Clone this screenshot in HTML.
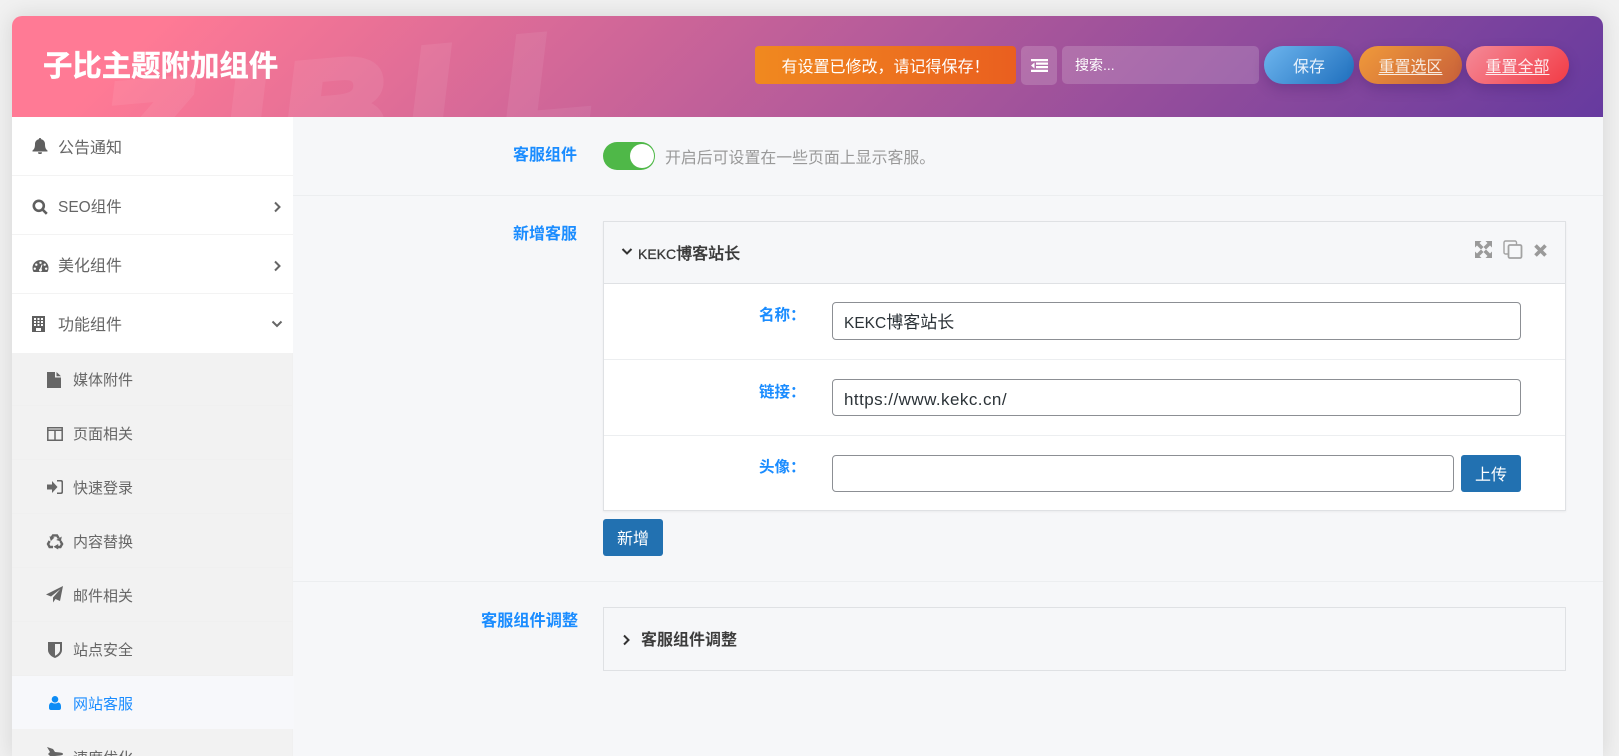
<!DOCTYPE html>
<html lang="zh"><head><meta charset="utf-8"><title>子比主题附加组件</title>
<style>
*{box-sizing:border-box}
html,body{margin:0;padding:0;width:1619px;height:756px;overflow:hidden;background:#f1f1f1;font-family:"Liberation Sans","Noto Sans CJK SC",sans-serif;color:#444}
.a{position:absolute}
.t{position:absolute;white-space:nowrap;line-height:20px}
#wrap{position:relative;width:1619px;height:756px;overflow:hidden}
#card{position:absolute;left:12px;top:16px;width:1591px;height:740px;background:#f6f7f9;border-radius:10px 10px 0 0;box-shadow:0 0 22px 2px rgba(0,0,0,.1)}
#hd{position:absolute;left:12px;top:16px;width:1591px;height:101px;border-radius:10px 10px 0 0;overflow:hidden;background:linear-gradient(135deg,#ff7a95 9%,#663a9f 100%)}
.w{position:absolute;font:italic 700 135px/170px "Liberation Sans",sans-serif;color:#fff;-webkit-text-stroke:9px #fff;opacity:.07;transform:rotate(-5deg) scaleX(1.08);white-space:nowrap}
.hb{position:absolute;top:46px;height:38px;line-height:43px;color:#fff;text-align:center;font-size:16px;white-space:nowrap}
.pill{border-radius:19px;box-shadow:0 5px 12px rgba(50,20,90,.25);text-decoration:underline;text-decoration-thickness:1px;text-underline-offset:2px}
#sb{position:absolute;left:12px;top:117px;width:281px;height:639px;background:#f2f2f2;border-right:1px solid #f0f0f0}
.m{position:absolute;left:0;width:281px;height:59px;background:#fff;border-bottom:1px solid #f3f3f3}
.m span{position:absolute;left:46px;top:21px;font-size:16px;line-height:22px;color:#666;white-space:nowrap}
.m svg{position:absolute;left:20px;top:23px;width:16px;height:16px;fill:#5f5f5f}
.s{position:absolute;left:0;width:281px;height:54px;border-bottom:1px solid #f0f0f0}
.s span{position:absolute;left:61px;top:18px;font-size:15px;line-height:21px;color:#666;white-space:nowrap}
.s svg{position:absolute;left:35px;top:20px;width:16px;height:16px;fill:#666}
.lab{position:absolute;font-size:16px;font-weight:700;line-height:22px;color:#1a8cff;text-align:right;white-space:nowrap}
.inp{position:absolute;background:#fff;border:1px solid #8c8f94;border-radius:4px;font-size:17px;color:#2c3338;line-height:40px;padding-left:11px;white-space:nowrap}
.btn{position:absolute;background:#2271b1;color:#fff;border-radius:3px;font-size:16px;text-align:center;line-height:41px}
.ln{position:absolute;height:1px;background:#eceef0}
</style></head><body>
<div id="wrap">
<div id="card"></div>
<div id="hd">
<div class="w" style="left:93px;top:29px">Z</div>
<div class="w" style="left:213px;top:15px">I</div>
<div class="w" style="left:273px;top:8px">B</div>
<div class="w" style="left:399px;top:-7px">L</div>
<div class="w" style="left:494px;top:-18px">L</div>
</div>
<div class="t" style="left:43px;top:46px;line-height:42px;font-size:29.400px;font-weight:700;color:#fff;-webkit-text-stroke:.4px #fff">子比主题附加组件</div>
<div class="hb" style="left:755px;width:261px;border-radius:4px;background:linear-gradient(90deg,#f0891f,#ea5f1f)">有设置已修改，请记得保存！</div>
<div class="a" style="left:1021px;top:46px;width:36px;height:39px;border-radius:5px;background:rgba(255,255,255,.17)"></div>
<svg class="a" style="left:1031px;top:59px" width="17" height="13" viewBox="0 0 17 13" fill="#fff"><path d="M0 0h17v2.200H0zM5 3.500h12v2.200H5zM5 7h12v2.200H5zM0 10.800h17V13H0zM3.500 3.500v6L0 6.500z"/></svg>
<div class="a" style="left:1062px;top:46px;width:197px;height:38px;border-radius:5px;background:rgba(255,255,255,.17)"></div>
<div class="t" style="left:1075px;top:55px;font-size:14px;color:#fff">搜索...</div>
<div class="hb pill" style="left:1264px;width:90px;background:linear-gradient(135deg,#6db5ee,#1f6fbd);text-decoration:none;color:#eaf2fb">保存</div>
<div class="hb pill" style="left:1359px;width:103px;background:linear-gradient(135deg,#f09a3a,#c8603a);color:#f8ebe0">重置选区</div>
<div class="hb pill" style="left:1466px;width:103px;background:linear-gradient(135deg,#f58a98,#f23b45);color:#fdeef0">重置全部</div>

<div id="sb">
<div class="m" style="top:0;height:59px"><svg viewBox="0 0 16 16" style="top:21px"><path d="M8 0a1.200 1.200 0 0 1 1.200 1.300C11.600 1.800 13 3.700 13 6.200c0 4 1.200 5.200 2.500 6.300V13.500H.5V12.500C1.800 11.400 3 10.200 3 6.200 3 3.700 4.400 1.800 6.800 1.300A1.200 1.200 0 0 1 8 0zM6 14.200h4a2 2 0 0 1-4 0z"/></svg><span>公告通知</span></div>
<div class="m" style="top:59px"><svg viewBox="0 0 16 16" style="fill:none;stroke:#5f5f5f;stroke-width:2.600"><circle cx="6.800" cy="6.800" r="5"/><path d="M10.500 10.500l4.300 4.300"/></svg><span style="font-size:15.500px">SEO组件</span><svg viewBox="0 0 10 12" style="left:260px;top:25px;width:10px;height:12px;fill:none;stroke:#666;stroke-width:2"><path d="M3 1.500l4.500 4.500L3 10.500"/></svg></div>
<div class="m" style="top:118px"><svg viewBox="0 0 16 16" style="width:17px"><path fill-rule="evenodd" d="M8 2a8 8 0 0 0-8 8c0 1.600.4 3 1.100 4h13.800c.7-1 1.100-2.400 1.100-4a8 8 0 0 0-8-8zM8 3.500a1.200 1.200 0 1 1 0 2.400 1.200 1.200 0 0 1 0-2.400zM3.800 5.500a1.200 1.200 0 1 1 0 2.400 1.200 1.200 0 0 1 0-2.400zM12.200 5.500a1.200 1.200 0 1 1 0 2.400 1.200 1.200 0 0 1 0-2.400zM2.300 9.500a1.200 1.200 0 1 1 0 2.400 1.200 1.200 0 0 1 0-2.400zM13.700 9.500a1.200 1.200 0 1 1 0 2.400 1.200 1.200 0 0 1 0-2.400zM9.200 6.500l.7.200L9 11a1.500 1.500 0 1 1-1.500-.3z"/></svg><span>美化组件</span><svg viewBox="0 0 10 12" style="left:260px;top:25px;width:10px;height:12px;fill:none;stroke:#666;stroke-width:2"><path d="M3 1.500l4.500 4.500L3 10.500"/></svg></div>
<div class="m" style="top:177px;border-bottom:0"><svg viewBox="0 0 13 16" style="left:20px;top:22px;width:13px;height:16px"><path fill-rule="evenodd" d="M0 0h13v16H0zM2 2v2h2V2zM5.500 2v2h2V2zM9 2v2h2V2zM2 5v2h2V5zM5.500 5v2h2V5zM9 5v2h2V5zM2 8v2h2V8zM5.500 8v2h2V8zM9 8v2h2V8zM4 12v3h5v-3z"/></svg><span>功能组件</span><svg viewBox="0 0 12 10" style="left:259px;top:25px;width:12px;height:10px;fill:none;stroke:#666;stroke-width:2"><path d="M1.500 2.500L6 7l4.500-4.500"/></svg></div>

<div class="s" style="top:235px"><svg viewBox="0 0 14 16" style="width:14px"><path d="M0 0h8v5.500h6V16H0zM9.500 0L14 4.200H9.500z"/></svg><span>媒体附件</span></div>
<div class="s" style="top:289px"><svg viewBox="0 0 16 14" style="top:21px;fill:none;stroke:#666;stroke-width:1.500;height:14px"><path d="M.8.800h14.400v12.400H.8zM.8 3.200h14.400M8 3v10"/></svg><span>页面相关</span></div>
<div class="s" style="top:343px"><svg viewBox="0 0 16 14" style="top:20px;height:14px"><path d="M0 4.500h5V1l5.500 6L5 13V9.500H0zM10 0h4a2 2 0 0 1 2 2v10a2 2 0 0 1-2 2h-4v-1.500h3.500a1 1 0 0 0 1-1v-9a1 1 0 0 0-1-1H10z"/></svg><span>快速登录</span></div>
<div class="s" style="top:397px"><svg viewBox="0 0 16 16" style="top:19px;fill:none;stroke:#666;stroke-width:2.400;overflow:visible"><path d="M4 5.500L6 2.400h4l1.700 2.900M13.400 8l1.700 3-1.700 3h-3.600M6 14H2.600L1 11l1.600-3"/><path d="M2.500 3.300l5 1.200-3.700 3.600zM14.800 3.500l-1 4.900-4.600-1.400zM11.200 11v5.500l-4.700-2.700z" fill="#666" stroke="none"/></svg><span>内容替换</span></div>
<div class="s" style="top:451px"><svg viewBox="0 0 17 17" style="left:34px;top:18px;width:17px;height:17px"><path d="M17 0L14 15l-4.500-2-2.500 3.500v-5L14.500 3 5 10.500 0 8.500z"/></svg><span>邮件相关</span></div>
<div class="s" style="top:505px"><svg viewBox="0 0 14 16" style="left:36px;width:14px"><path fill-rule="evenodd" d="M0 0h14v8c0 4-4 7-7 8-3-1-7-4-7-8zM7 2v11.800c2-1 5-3.200 5-5.800V2z"/></svg><span>站点安全</span></div>
<div class="s" style="top:559px;background:#f7f8fb;width:282px;height:53px;border:0"><svg viewBox="0 0 12 14" style="left:37px;width:12px;height:14px;fill:#0d8cf5"><circle cx="6" cy="3.300" r="3.300"/><path d="M2.800 6.500c1.800 1.300 4.600 1.300 6.400 0C11 6.800 12 8 12 10.500v1.500c0 1.200-.8 2-2 2H2c-1.200 0-2-.8-2-2v-1.500C0 8 1 6.800 2.800 6.500z"/></svg><span style="color:#1a8cff">网站客服</span></div>
<div class="s" style="top:613px;border:0"><svg viewBox="0 0 16 16" style="top:16px"><path d="M0 1l6 2 2 3 5 .5c2 .2 3 .7 3 1.500s-1 1.300-3 1.500L8 10l-2 3-6 2 3-5-2-2 2-2z"/></svg><span>速度优化</span></div>
</div>

<div class="ln" style="left:293px;top:195px;width:1310px"></div>
<div class="ln" style="left:293px;top:581px;width:1310px"></div>
<div class="lab" style="left:513px;top:145px">客服组件</div>
<div class="a" style="left:603px;top:142px;width:52px;height:28px;border-radius:14px;background:#4fb848"></div>
<div class="a" style="left:630px;top:144px;width:24px;height:24px;border-radius:50%;background:#fff"></div>
<div class="t" style="left:665px;top:148px;font-size:15.900px;color:#999;line-height:22px">开启后可设置在一些页面上显示客服。</div>

<div class="lab" style="left:513px;top:224px">新增客服</div>
<div class="a" style="left:603px;top:221px;width:963px;height:290px;border:1px solid #dfe1e4;background:#fff;box-shadow:0 1px 2px rgba(0,0,0,.05)"></div>
<div class="a" style="left:604px;top:222px;width:961px;height:62px;background:#f6f7f9;border-bottom:1px solid #dfe1e4"></div>
<svg class="a" style="left:621px;top:247px" width="12" height="10" viewBox="0 0 12 10" fill="none" stroke="#333" stroke-width="2"><path d="M1.500 2L6 6.500 10.500 2"/></svg>
<div class="t" style="left:638px;top:243px;font-size:16px;font-weight:500;color:#3a3a3a;line-height:22px;-webkit-text-stroke:.3px #3a3a3a"><span style="font-size:14px">KEKC</span>博客站长</div>
<svg class="a" style="left:1475px;top:241px" width="17" height="17" viewBox="0 0 17 17" fill="#9a9a9a"><path d="M0 0h6.500L4.500 2 8.500 6 6 8.500 2 4.500 0 6.500zM17 0v6.500L15 4.500 11 8.500 8.500 6 12.500 2 10.500 0zM0 17v-6.500L2 12.500 6 8.500 8.500 11 4.500 15l2 2zM17 17h-6.500l2-2L8.500 11 11 8.500 15 12.500l2-2z"/></svg>
<svg class="a" style="left:1503px;top:240px" width="20" height="19" viewBox="0 0 20 19" fill="none" stroke="#a3a3a3" stroke-width="1.400"><path d="M5 14H2.500A1.500 1.500 0 0 1 1 12.500V2.500A1.500 1.500 0 0 1 2.500 1H12a1.500 1.500 0 0 1 1.500 1.500V5"/><rect x="5.500" y="5" width="13" height="13" rx="1.500" stroke-width="1.800"/></svg>
<svg class="a" style="left:1534px;top:244px" width="13" height="13" viewBox="0 0 13 13" fill="none" stroke="#9a9a9a" stroke-width="3.600"><path d="M1.500 1.500l10 10M11.500 1.500l-10 10"/></svg>

<div class="lab" style="left:759px;top:305px;font-size:15.500px">名称：</div>
<div class="inp" style="left:832px;top:302px;width:689px;height:38px"><span style="font-size:15.500px">KEKC</span>博客站长</div>
<div class="ln" style="left:604px;top:359px;width:961px"></div>
<div class="lab" style="left:759px;top:382px;font-size:15.500px">链接：</div>
<div class="inp" style="left:832px;top:379px;width:689px;height:37px;letter-spacing:.45px">https://www.kekc.cn/</div>
<div class="ln" style="left:604px;top:435px;width:961px"></div>
<div class="lab" style="left:759px;top:457px;font-size:15.500px">头像：</div>
<div class="inp" style="left:832px;top:455px;width:622px;height:37px"></div>
<div class="btn" style="left:1461px;top:455px;width:60px;height:37px">上传</div>
<div class="btn" style="left:603px;top:519px;width:60px;height:37px">新增</div>

<div class="lab" style="left:481px;top:610px;font-size:16.200px">客服组件调整</div>
<div class="a" style="left:603px;top:607px;width:963px;height:64px;border:1px solid #dfe1e4"></div>
<svg class="a" style="left:621px;top:634px" width="10" height="12" viewBox="0 0 10 12" fill="none" stroke="#333" stroke-width="2"><path d="M3 1.500L7.500 6 3 10.500"/></svg>
<div class="t" style="left:641px;top:630px;font-size:16px;font-weight:700;color:#3c3c3c;line-height:22px">客服组件调整</div>
</div>
</body></html>
